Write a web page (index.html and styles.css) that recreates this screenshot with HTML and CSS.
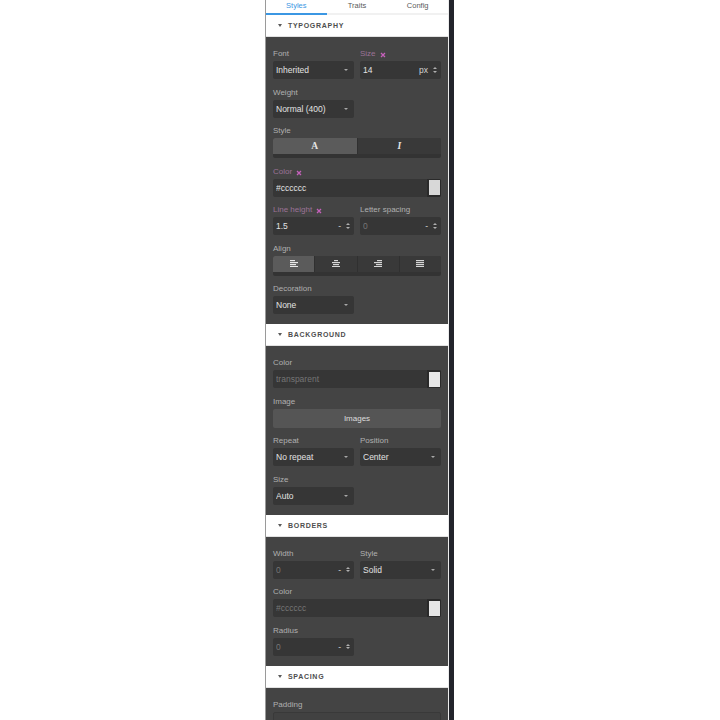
FILE: index.html
```html
<!DOCTYPE html>
<html>
<head>
<meta charset="utf-8">
<link rel="stylesheet" href="styles.css">
</head>
<body>
<div class="frame">
  <div class="edge"></div>
  <div class="panel">
    <div class="tabs">
      <div class="tab active">Styles</div>
      <div class="tab">Traits</div>
      <div class="tab">Config</div>
    </div>

    <div class="sector">
      <div class="sector-title"><span class="s-caret"></span>Typography</div>
      <div class="props">
        <div class="prop">
          <div class="label">Font</div>
          <div class="field"><span class="val">Inherited</span><span class="dd"></span></div>
        </div>
        <div class="prop">
          <div class="label changed">Size <svg class="clr" viewBox="0 0 6 6"><path d="M1 1L5 5M5 1L1 5"/></svg></div>
          <div class="field"><span class="val">14</span><span class="unit">px</span><span class="arrows"><i class="up"></i><i class="down"></i></span></div>
        </div>
        <div class="prop half">
          <div class="label">Weight</div>
          <div class="field"><span class="val">Normal (400)</span><span class="dd"></span></div>
        </div>
        <div class="prop full">
          <div class="label">Style</div>
          <div class="radio">
            <div class="rbtn on"><span class="glyph-a">A</span></div>
            <div class="rbtn"><span class="glyph-i">I</span></div>
          </div>
        </div>
        <div class="prop full">
          <div class="label changed">Color <svg class="clr" viewBox="0 0 6 6"><path d="M1 1L5 5M5 1L1 5"/></svg></div>
          <div class="field color"><span class="val">#cccccc</span><span class="swatch"><i></i></span></div>
        </div>
        <div class="prop">
          <div class="label changed">Line height <svg class="clr" viewBox="0 0 6 6"><path d="M1 1L5 5M5 1L1 5"/></svg></div>
          <div class="field"><span class="val">1.5</span><span class="unit">-</span><span class="arrows"><i class="up"></i><i class="down"></i></span></div>
        </div>
        <div class="prop">
          <div class="label">Letter spacing</div>
          <div class="field"><span class="val dim">0</span><span class="unit">-</span><span class="arrows"><i class="up"></i><i class="down"></i></span></div>
        </div>
        <div class="prop full">
          <div class="label">Align</div>
          <div class="radio">
            <div class="rbtn on"><svg class="ico" viewBox="0 0 8 7"><rect x="0" y="0" width="5" height="1.2"/><rect x="0" y="2" width="8" height="1.2"/><rect x="0" y="4" width="6" height="1.2"/><rect x="0" y="6" width="8" height="1"/></svg></div>
            <div class="rbtn"><svg class="ico" viewBox="0 0 8 7"><rect x="2" y="0" width="4" height="1.2"/><rect x="0" y="2" width="8" height="1.2"/><rect x="1" y="4" width="6" height="1.2"/><rect x="0" y="6" width="8" height="1"/></svg></div>
            <div class="rbtn"><svg class="ico" viewBox="0 0 8 7"><rect x="3" y="0" width="5" height="1.2"/><rect x="0" y="2" width="8" height="1.2"/><rect x="2" y="4" width="6" height="1.2"/><rect x="0" y="6" width="8" height="1"/></svg></div>
            <div class="rbtn"><svg class="ico" viewBox="0 0 8 7"><rect x="0" y="0" width="8" height="1.2"/><rect x="0" y="2" width="8" height="1.2"/><rect x="0" y="4" width="8" height="1.2"/><rect x="0" y="6" width="8" height="1"/></svg></div>
          </div>
        </div>
        <div class="prop half">
          <div class="label">Decoration</div>
          <div class="field"><span class="val">None</span><span class="dd"></span></div>
        </div>
      </div>
    </div>

    <div class="sector">
      <div class="sector-title"><span class="s-caret"></span>Background</div>
      <div class="props">
        <div class="prop full">
          <div class="label">Color</div>
          <div class="field color"><span class="val dim">transparent</span><span class="swatch"><i class="light"></i></span></div>
        </div>
        <div class="prop full">
          <div class="label">Image</div>
          <div class="button">Images</div>
        </div>
        <div class="prop">
          <div class="label">Repeat</div>
          <div class="field"><span class="val">No repeat</span><span class="dd"></span></div>
        </div>
        <div class="prop">
          <div class="label">Position</div>
          <div class="field"><span class="val">Center</span><span class="dd"></span></div>
        </div>
        <div class="prop half">
          <div class="label">Size</div>
          <div class="field"><span class="val">Auto</span><span class="dd"></span></div>
        </div>
      </div>
    </div>

    <div class="sector">
      <div class="sector-title"><span class="s-caret"></span>Borders</div>
      <div class="props">
        <div class="prop">
          <div class="label">Width</div>
          <div class="field"><span class="val dim">0</span><span class="unit">-</span><span class="arrows"><i class="up"></i><i class="down"></i></span></div>
        </div>
        <div class="prop">
          <div class="label">Style</div>
          <div class="field"><span class="val">Solid</span><span class="dd"></span></div>
        </div>
        <div class="prop full">
          <div class="label">Color</div>
          <div class="field color"><span class="val dim">#cccccc</span><span class="swatch"><i class="light"></i></span></div>
        </div>
        <div class="prop half">
          <div class="label">Radius</div>
          <div class="field"><span class="val dim">0</span><span class="unit">-</span><span class="arrows"><i class="up"></i><i class="down"></i></span></div>
        </div>
      </div>
    </div>

    <div class="sector">
      <div class="sector-title"><span class="s-caret"></span>Spacing</div>
      <div class="props">
        <div class="prop full">
          <div class="label">Padding</div>
          <div class="composite"></div>
        </div>
      </div>
    </div>
  </div>
  <div class="gap"></div>
  <div class="scroll"></div>
</div>
</body>
</html>
```

FILE: styles.css
```css
html, body {
  margin: 0;
  padding: 0;
  height: 720px;
  overflow: hidden;
  background: #ffffff;
  font-family: "Liberation Sans", Arial, sans-serif;
}

.frame {
  display: flex;
  height: 720px;
  margin-left: 265px;
}

.edge {
  width: 1px;
  background: #9a9a9a;
}

.panel {
  width: 182px;
  background: #444444;
  display: flex;
  flex-direction: column;
  overflow: hidden;
}

.gap {
  width: 1px;
  background: #ececec;
}

.scroll {
  width: 5px;
  background: #22242b;
}

/* tabs */
.tabs {
  display: flex;
  background: #ffffff;
  flex: none;
}

.tab {
  flex: 1;
  height: 13px;
  line-height: 11px;
  text-align: center;
  font-size: 7.5px;
  color: #5a5a5a;
  border-bottom: 2px solid #f1f1f1;
}

.tab.active {
  color: #3b97e3;
  border-bottom-color: #3b97e3;
}

/* sectors */
.sector {
  flex: none;
}

.sector-title {
  height: 21px;
  line-height: 21px;
  background: #ffffff;
  border-bottom: 1px solid #e2e2e2;
  padding-left: 12px;
  display: flex;
  align-items: center;
  font-size: 7px;
  font-weight: bold;
  letter-spacing: 0.7px;
  text-transform: uppercase;
  color: #4e4e4e;
}

.s-caret {
  width: 0;
  height: 0;
  border-left: 2.5px solid transparent;
  border-right: 2.5px solid transparent;
  border-top: 3px solid #5a5a5a;
  margin-right: 6px;
}

.props {
  display: grid;
  grid-template-columns: 81px 81px;
  column-gap: 6px;
  row-gap: 6.5px;
  padding: 10px 7px 10px 7px;
}

.prop.full {
  grid-column: 1 / 3;
}

.prop.half {
  grid-column: 1 / 2;
}

.label {
  height: 14px;
  line-height: 14px;
  font-size: 8px;
  color: #b0b0b0;
  display: flex;
  align-items: center;
  white-space: nowrap;
}

.label.changed {
  color: #9c7397;
}

.clr {
  width: 6px;
  height: 6px;
  margin-left: 4px;
  margin-top: 2px;
  fill: none;
  stroke: #c561bb;
  stroke-width: 1.3;
}

/* fields */
.field {
  height: 18px;
  background: #363636;
  border-radius: 2px;
  display: flex;
  align-items: center;
  padding: 0 4px 0 3px;
  font-size: 8.5px;
  color: #e2e2e2;
  box-sizing: border-box;
}

.val {
  flex: 1;
  white-space: nowrap;
  overflow: hidden;
}

.val.dim {
  color: #757575;
}

.unit {
  font-size: 8.5px;
  color: #d4d4d4;
  margin-right: 4px;
}

.dd {
  width: 0;
  height: 0;
  border-left: 2px solid transparent;
  border-right: 2px solid transparent;
  border-top: 2.5px solid #a8a8a8;
  margin-right: 2px;
}

.arrows {
  display: flex;
  flex-direction: column;
  gap: 1.5px;
  width: 5px;
  align-items: center;
}

.arrows i {
  display: block;
  width: 0;
  height: 0;
  border-left: 2px solid transparent;
  border-right: 2px solid transparent;
}

.arrows .up {
  border-bottom: 2.5px solid #b0b0b0;
}

.arrows .down {
  border-top: 2.5px solid #b0b0b0;
}

.field.color {
  padding-right: 0;
}

.swatch {
  width: 14px;
  height: 18px;
  box-sizing: border-box;
  background: #2a2a2a;
  padding: 1.5px 1px 1.5px 2px;
  border-radius: 0 2px 2px 0;
}

.swatch i {
  display: block;
  width: 100%;
  height: 100%;
  background: #d8d8d8;
}

.swatch i.light {
  background: #e6e6e6;
}

/* radio */
.radio {
  height: 20px;
  box-sizing: border-box;
  background: #333333;
  padding-bottom: 4px;
  display: flex;
  border-radius: 2px;
  overflow: hidden;
}

.rbtn {
  flex: 1;
  height: 16px;
  background: #393939;
  display: flex;
  align-items: center;
  justify-content: center;
  border-left: 1px solid #303030;
}

.rbtn:first-child {
  border-left: none;
}

.rbtn.on {
  background: #5b5b5b;
}

.glyph-a {
  font-family: "Liberation Serif", "Times New Roman", serif;
  font-weight: bold;
  font-size: 9.5px;
  color: #e4e4e4;
}

.glyph-i {
  font-family: "Liberation Serif", "Times New Roman", serif;
  font-weight: bold;
  font-style: italic;
  font-size: 9.5px;
  color: #e4e4e4;
}

.ico {
  width: 8px;
  height: 7px;
  fill: #d6d6d6;
}

.rbtn.on .ico {
  fill: #e8e8e8;
}

/* button */
.button {
  height: 19px;
  line-height: 19px;
  background: #555555;
  border-radius: 2px;
  text-align: center;
  font-size: 8px;
  color: #dddddd;
}

/* composite */
.composite {
  height: 40px;
  background: #414141;
  border: 1px solid #393939;
  border-radius: 2px;
}
```
